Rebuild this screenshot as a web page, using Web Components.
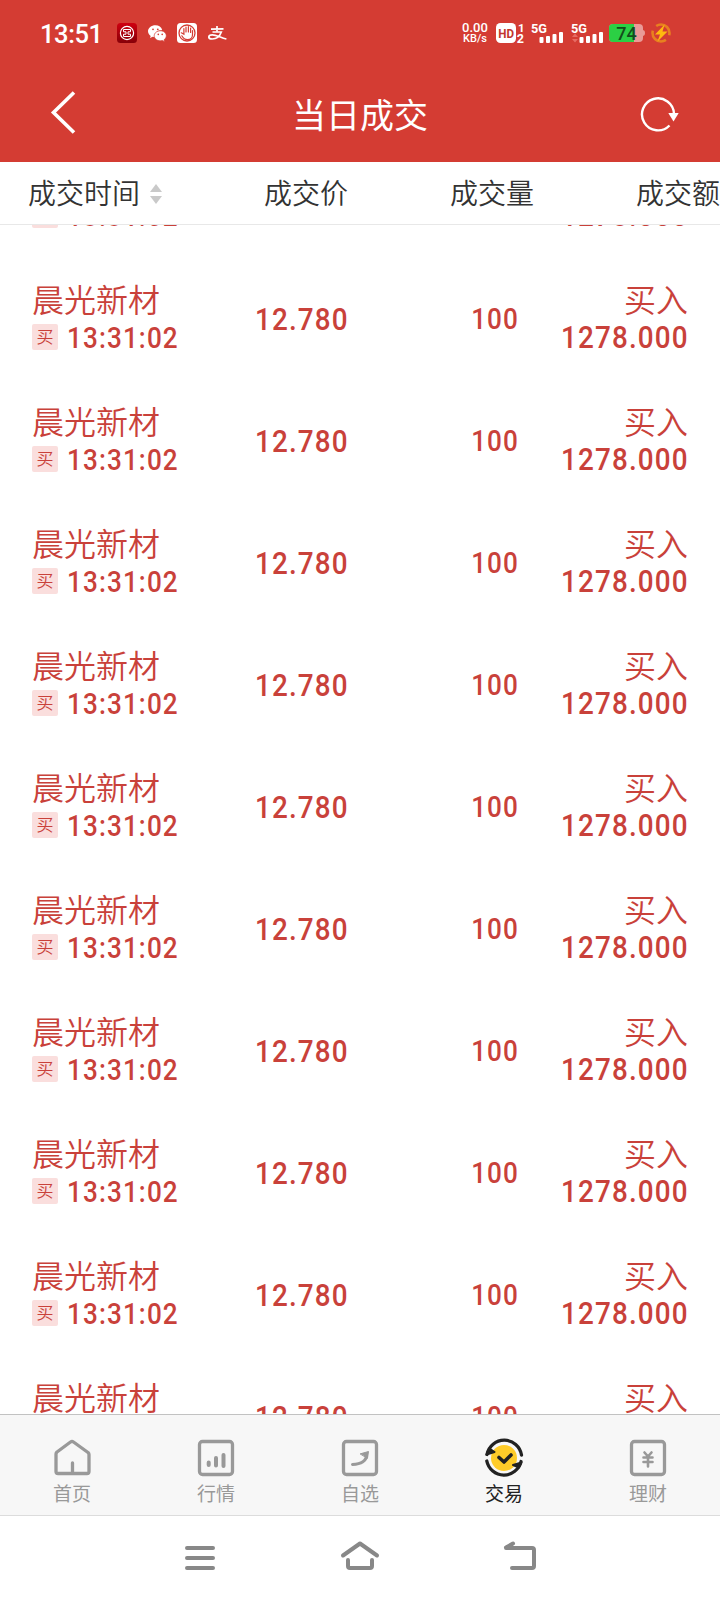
<!DOCTYPE html>
<html lang="zh-CN">
<head>
<meta charset="utf-8">
<meta name="viewport" content="width=device-width, initial-scale=1">
<title>当日成交</title>
<style>
    body {
        margin: 0;
        background: #fff;
        font-family: Roboto, "Noto Sans CJK SC", sans-serif;
    }
</style>
</head>
<body>
<trade-app></trade-app>

<script>
class BaseElement extends HTMLElement {
    constructor() {
        super();
        this.shadow = this.attachShadow({ mode: "open" });
    }

    connectedCallback() {
        this.shadow.innerHTML = this.render();
    }
}

/* Digits, slightly condensed. Anchored to one side so columns line up */
class FinNumber extends BaseElement {
    render() {
        return `
            <style>
                :host { display: block; font-weight: 500; white-space: nowrap; }
                span { display: inline-block; transform: scaleX(.87); transform-origin: right center; letter-spacing: 1.3px; margin-right: -1px; }
                :host([start]) span { transform-origin: left center; }
            </style>
            <span><slot></slot></span>
        `;
    }
}
customElements.define("fin-number", FinNumber);

class StatusBar extends BaseElement {
    render() {
        return `
            <style>
                :host { display: flex; justify-content: space-between; height: 66px; padding: 0 48px 0 40px; box-sizing: border-box; color: #fff; }
                .side { display: flex; align-items: center; }
                .time { font-size: 25.5px; font-weight: 500; line-height: 66px; padding-top: 2px; width: 77px; letter-spacing: -.4px; }
                .left svg { margin-right: 10px; }
                svg { display: block; flex: none; }
                .rate { width: 28px; font-size: 13px; line-height: 12px; font-weight: 500; text-align: center; margin-right: 7px; white-space: nowrap; }
                .rate small { display: block; font-size: 11px; line-height: 10px; }
                text { font-family: Roboto, "Noto Sans CJK SC", sans-serif; }
            </style>
            <div class="side left">
                <div class="time">13:51</div>
                <svg width="20" height="20" viewBox="0 0 20 20">
                    <defs><linearGradient id="g" x2="0" y2="1"><stop stop-color="#cf0010"/><stop offset="1" stop-color="#860008"/></linearGradient></defs>
                    <rect width="20" height="20" rx="3.5" fill="url(#g)"/>
                    <circle cx="10" cy="10" r="6.6" fill="none" stroke="#fff" stroke-width="1.2"/>
                    <path d="M6.5 6.5h7v2.3h-2.5v2.4h2.5v2.3h-7v-2.3H9V8.800H6.500z" fill="none" stroke="#fff" stroke-width="1"/>
                </svg>
                <svg width="20" height="20" viewBox="0 0 20 20" fill="#fff">
                    <path d="M8.500 2.200C4.300 2.200 1 4.900 1 8.300c0 1.900 1 3.500 2.700 4.600L3 15l2.700-1.300c.8.200 1.600.4 2.500.4-.8-4 2.400-7.100 7-7.100C14.500 4.200 11.800 2.200 8.500 2.200z"/>
                    <path d="M13.300 7.800c-3.400 0-6.100 2.200-6.100 5s2.700 5 6.100 5c.7 0 1.400-.1 2.100-.3l2.200 1.200-.6-1.900c1.400-.9 2.300-2.300 2.300-4 0-2.800-2.600-5-6-5z" stroke="#d43c33" stroke-width=".7"/>
                    <g fill="#d43c33"><circle cx="6" cy="6.300" r=".9"/><circle cx="10.800" cy="6.300" r=".9"/><circle cx="11.300" cy="11.400" r=".8"/><circle cx="15.200" cy="11.400" r=".8"/></g>
                </svg>
                <svg width="20" height="20" viewBox="0 0 20 20">
                    <rect width="20" height="20" rx="3.500" fill="#fff"/>
                    <circle cx="10" cy="10" r="8" fill="none" stroke="#d43c33" stroke-width="1.300"/>
                    <path d="M4.300 9.800l2.600 1.500V5.600M9 9V4M11.400 9V3.700M13.600 9.500V5M15.500 7.500v4.200c0 3-2.200 5-5 5-2.600 0-4.300-1.300-5.700-3.900" fill="none" stroke="#d43c33" stroke-width="1.200" stroke-linecap="round"/>
                </svg>
                <svg width="20" height="20" viewBox="0 0 20 20" fill="none" stroke="#fff">
                    <path d="M4 6.200l12.500-.4M10 3v5.800" stroke-width="1.700"/>
                    <path d="M5.500 9h8.800c-1.400 4-4.700 7-9.200 7-2.300 0-3.300-.8-3.300-2 0-1.400 1.500-2.200 3.600-2.200 4 0 8.500 3 14 4.200" stroke-width="1.700"/>
                </svg>
            </div>
            <div class="side">
                <div class="rate">0.00<small>KB/s</small></div>
                <svg width="29" height="22" viewBox="0 0 29 22">
                    <rect y="1" width="20" height="20" rx="4.500" fill="#fff"/>
                    <text x="2.200" y="15.600" font-size="13" font-weight="700" textLength="15.800" lengthAdjust="spacingAndGlyphs" fill="#c2352d">HD</text>
                    <text x="22" y="9.500" font-size="11.500" font-weight="700" fill="#fff">1</text>
                    <text x="20.800" y="21" font-size="12.500" font-weight="700" fill="#fff">2</text>
                </svg>
                <svg width="34" height="22" viewBox="0 0 34 22" fill="#fff" style="margin-left:6px">
                    <text x="0" y="10.500" font-size="13" font-weight="700" textLength="16" lengthAdjust="spacingAndGlyphs">5G</text>
                    <rect x="8.500" y="15" width="4" height="6" rx="1"/><rect x="15" y="14" width="4" height="7" rx="1"/><rect x="21.500" y="12" width="4" height="9" rx="1"/><rect x="28" y="10" width="4" height="11" rx="1"/>
                </svg>
                <svg width="34" height="22" viewBox="0 0 34 22" fill="#fff" style="margin-left:6px">
                    <text x="0" y="10.500" font-size="13" font-weight="700" textLength="16" lengthAdjust="spacingAndGlyphs">5G</text>
                    <path d="M1 15l3-3.500L7 15zM1 17l3 3.500L7 17z" fill="#e76b64"/>
                    <rect x="8.500" y="15" width="4" height="6" rx="1"/><rect x="15" y="14" width="4" height="7" rx="1"/><rect x="21.500" y="12" width="4" height="9" rx="1"/><rect x="28" y="10" width="4" height="11" rx="1"/>
                </svg>
                <svg width="36" height="20" viewBox="0 0 36 20" style="margin-left:4px">
                    <rect y="1" width="34" height="18" rx="4" fill="#e99a97"/>
                    <path d="M33.500 7q2.500 0 2.500 3t-2.500 3z" fill="#e99a97"/>
                    <path d="M4 1h21v18H4q-4 0-4-4V5q0-4 4-4z" fill="#2bd044"/>
                    <text x="17.500" y="16.800" font-size="18" font-weight="500" text-anchor="middle" fill="#134d1b">74</text>
                </svg>
                <svg width="20" height="20" viewBox="0 0 20 20" style="margin:0 1px 0 6px">
                    <circle cx="10" cy="10" r="8.500" fill="none" stroke="#e8811f" stroke-width="2.600" stroke-dasharray="21 5.700" stroke-dashoffset="-8"/>
                    <path d="M13.600 1.500L4 11.500h5L6.500 18.600l10-10.200h-5z" fill="#ffb80f"/>
                </svg>
            </div>
        `;
    }
}
customElements.define("status-bar", StatusBar);

class TitleBar extends BaseElement {
    render() {
        return `
            <style>
                :host { display: grid; grid-template-columns: 100px 1fr 100px; align-items: center; height: 96px; color: #fff; }
                h1 { margin: 0; padding-top: 4px; font-size: 34px; line-height: 92px; font-weight: 400; text-align: center; }
                svg { display: block; fill: none; stroke: #fff; }
                .back { margin: 0 0 4px 48px; }
                .reload { margin: 0 0 0 19px; }
            </style>
            <svg class="back" width="32" height="46" viewBox="0 0 32 46"><path d="M26 3.500L5.500 23.500 26 43.500" stroke-width="3.600"/></svg>
            <h1><slot></slot></h1>
            <svg class="reload" width="42" height="38" viewBox="0 0 42 38">
                <path d="M30.500 30.500A16 16 0 1 1 35 19" stroke-width="2.400"/>
                <path d="M29.300 18h10.400L34.500 26.500z" fill="#fff" stroke="none"/>
            </svg>
        `;
    }
}
customElements.define("title-bar", TitleBar);

class ColumnHead extends BaseElement {
    render() {
        return `
            <style>
                :host {
                    display: grid; grid-template-columns: 236px 186px 186px 100px; height: 63px; box-sizing: border-box;
                    padding-left: 28px; border-bottom: 1px solid #e8e8e8; overflow: hidden; color: #333;
                    font-size: 28px; line-height: 58px; font-weight: 350; white-space: nowrap; background: #fff;
                }
                div { display: flex; align-items: center; padding-top: 4px; }
                svg { margin: 0 0 2px 10px; }
            </style>
            <div>成交时间<svg width="12" height="20" viewBox="0 0 12 20" fill="#c9c9c9"><path d="M0 8l6-8 6 8zM0 12l6 8 6-8z"/></svg></div>
            <div>成交价</div>
            <div>成交量</div>
            <div>成交额</div>
        `;
    }
}
customElements.define("column-head", ColumnHead);

class DealRow extends BaseElement {
    set data(deal) {
        this._deal = deal;
    }

    render() {
        const d = this._deal;
        return `
            <style>
                :host {
                    display: grid; grid-template-columns: 160px 156px 170px 1fr; align-items: center;
                    height: 122px; padding: 0 32px; box-sizing: border-box; color: #c9413a;
                }
                .name, .side { height: 38px; font-size: 32px; line-height: 40px; font-weight: 350; white-space: nowrap; }
                .sub { display: flex; align-items: center; height: 36px; }
                .tag {
                    width: 26px; height: 26px; margin-right: 9px; border-radius: 2px; background: #fadedd;
                    font-size: 17px; line-height: 27px; text-align: center; flex: none; font-weight: 350;
                }
                .sub fin-number, .volume { font-size: 30px; }
                .price, .amount { font-size: 32px; }
                .price, .volume, .right { text-align: right; }
                .price { padding-top: 2px; }
                .volume { padding-top: 1px; }
                .amount { height: 36px; line-height: 37px; }
                /* row scrolled under the head: only its lower line is in view */
                :host([tail]) :is(.name, .side, .price, .volume) { visibility: hidden; }
            </style>
            <div>
                <div class="name">${d.name}</div>
                <div class="sub"><span class="tag">买</span><fin-number start>${d.time}</fin-number></div>
            </div>
            <fin-number class="price">${d.price}</fin-number>
            <fin-number class="volume">${d.volume}</fin-number>
            <div class="right">
                <div class="side">${d.side}</div>
                <fin-number class="amount">${d.amount}</fin-number>
            </div>
        `;
    }
}
customElements.define("deal-row", DealRow);

class DealList extends BaseElement {
    connectedCallback() {
        this.shadow.innerHTML = `
            <style>
                :host { display: block; overflow: hidden; background: #fff; }
                .track { margin-top: -90px; }
            </style>
            <div class="track"></div>
        `;
        const track = this.shadow.querySelector(".track");
        for (let i = 0; i < 11; i++) {
            const row = document.createElement("deal-row");
            row.data = { name: "晨光新材", time: "13:31:02", price: "12.780", volume: "100", side: "买入", amount: "1278.000" };
            row.toggleAttribute("tail", i === 0);
            track.appendChild(row);
        }
    }
}
customElements.define("deal-list", DealList);

class TabItem extends BaseElement {
    render() {
        return `
            <style>
                :host { display: flex; flex-direction: column; align-items: center; padding-top: 23px; color: #999; font-size: 19px; line-height: 26px; }
                :host([active]) { color: #222; }
                ::slotted(svg) { display: block; margin-bottom: 4px; }
            </style>
            <slot name="icon"></slot>
            <span><slot></slot></span>
        `;
    }
}
customElements.define("tab-item", TabItem);

class TabBar extends BaseElement {
    render() {
        const box = `<rect x="3.500" y="3.500" width="33" height="33" rx="3"/>`;
        const attrs = `slot="icon" width="40" height="40" viewBox="0 0 40 40" fill="none" stroke="#999" stroke-width="3.300" stroke-linecap="round" stroke-linejoin="round"`;
        return `
            <style>
                :host { display: grid; grid-template-columns: repeat(5, 1fr); height: 102px; box-sizing: border-box; background: #f7f7f7; border-top: 1px solid #c2c2c2; border-bottom: 1px solid #dcdcdc; }
            </style>
            <tab-item><svg ${attrs}><path d="M6 35.500q-2 0-2-2V16q0-1 1-2L18.500 4q1.500-1 3 0L36 14.500q1 1 1 2v17q0 2-2 2zM20.500 34v-9" /></svg>首页</tab-item>
            <tab-item><svg ${attrs}>${box}<path d="M12.700 24.500v2.500M20 20v7.500M27.500 17v11" stroke-width="4"/></svg>行情</tab-item>
            <tab-item><svg ${attrs}>${box}<path d="M12.500 26.500C21 26 27 23 26.500 16.500" stroke-width="3"/><path d="M20.500 15.800L28.500 13.500 27.500 20z" fill="#999" stroke-width="1"/></svg>自选</tab-item>
            <tab-item active><svg ${attrs}>
                <circle cx="20" cy="20" r="13" fill="#ffcc29" stroke="none"/>
                <g stroke="#222"><path d="M3 16.500A17.500 17.500 0 0 1 37.500 17M37 23.500A17.500 17.500 0 0 1 2.800 23"/>
                <path d="M2.500 16.500L5.500 10.500 10.500 14zM37.500 24.500L35 29.500 29 27z" fill="#222" stroke-width="2"/>
                <path d="M15 19.500l5 4.500 7-7" stroke-width="3.600"/></g>
            </svg>交易</tab-item>
            <tab-item><svg ${attrs}>${box}<path d="M16.500 14.500l3.500 4 3.500-4M20 19v9.500M15.500 19.500h9M15.500 24h9" stroke-width="2.600"/></svg>理财</tab-item>
        `;
    }
}
customElements.define("tab-bar", TabBar);

class SystemNav extends BaseElement {
    render() {
        return `
            <style>
                :host { display: flex; justify-content: center; align-items: center; gap: 120px; height: 84px; background: #fff; }
                svg { display: block; fill: none; stroke: #888; stroke-width: 4; stroke-linecap: round; stroke-linejoin: round; }
            </style>
            <svg width="40" height="40" viewBox="0 0 40 40"><path d="M7 10h26M7 20h26M7 30h26"/></svg>
            <svg width="40" height="40" viewBox="0 0 40 40"><path d="M3 17.500L20 5.500 37 17.500M8 22v6q0 2 2 2h20q2 0 2-2v-6"/></svg>
            <svg width="40" height="40" viewBox="0 0 40 40"><path d="M6 10h26q2 0 2 2v16q0 2-2 2H12M6 9.500l7-4"/></svg>
        `;
    }
}
customElements.define("system-nav", SystemNav);

class TradeApp extends BaseElement {
    render() {
        return `
            <style>
                :host { display: flex; flex-direction: column; width: 720px; height: 1600px; overflow: hidden; }
                header { background: #d43c33; flex: none; }
                column-head, tab-bar, system-nav { flex: none; }
                deal-list { flex: 1; min-height: 0; }
            </style>
            <header>
                <status-bar></status-bar>
                <title-bar>当日成交</title-bar>
            </header>
            <column-head></column-head>
            <deal-list></deal-list>
            <tab-bar></tab-bar>
            <system-nav></system-nav>
        `;
    }
}
customElements.define("trade-app", TradeApp);
</script>
</body>
</html>
